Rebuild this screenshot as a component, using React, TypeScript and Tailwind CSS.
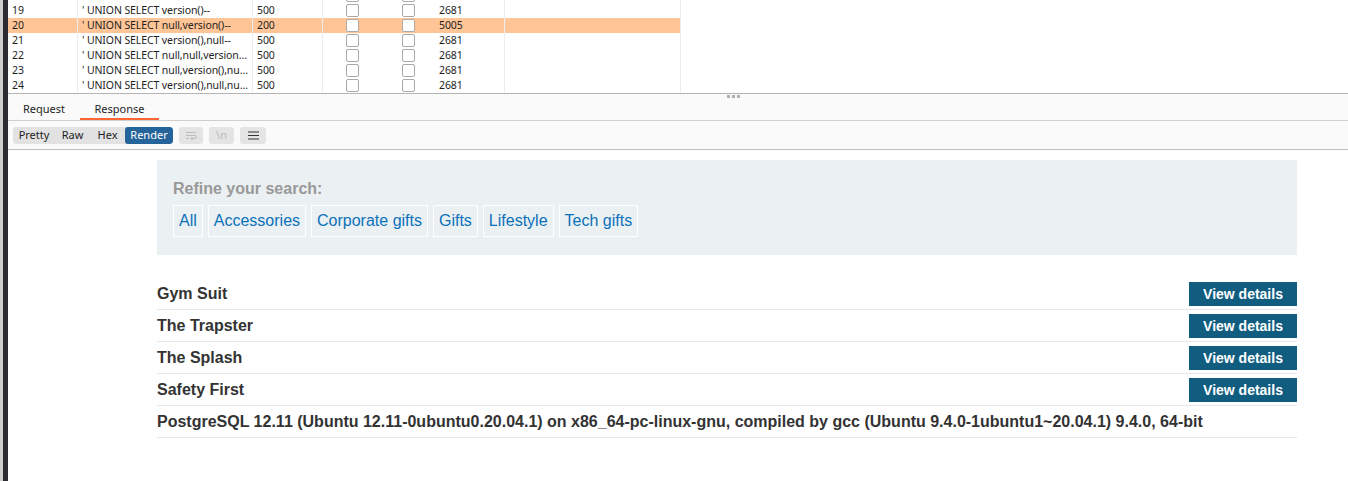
import React from "react";

type Row = { n: number; payload: string; status: number; len: number; hit?: boolean };

const ROWS: Row[] = [
  { n: 18, payload: "' UNION SELECT null,null--", status: 500, len: 2681 },
  { n: 19, payload: "' UNION SELECT version()--", status: 500, len: 2681 },
  { n: 20, payload: "' UNION SELECT null,version()--", status: 200, len: 5005, hit: true },
  { n: 21, payload: "' UNION SELECT version(),null--", status: 500, len: 2681 },
  { n: 22, payload: "' UNION SELECT null,null,version()--", status: 500, len: 2681 },
  { n: 23, payload: "' UNION SELECT null,version(),null--", status: 500, len: 2681 },
  { n: 24, payload: "' UNION SELECT version(),null,null--", status: 500, len: 2681 },
];

const FILTERS = ["All", "Accessories", "Corporate gifts", "Gifts", "Lifestyle", "Tech gifts"];
const PRODUCTS = ["Gym Suit", "The Trapster", "The Splash", "Safety First"];
const VERSION =
  "PostgreSQL 12.11 (Ubuntu 12.11-0ubuntu0.20.04.1) on x86_64-pc-linux-gnu, compiled by gcc (Ubuntu 9.4.0-1ubuntu1~20.04.1) 9.4.0, 64-bit";

function Box() {
  return <span className="block h-[13px] w-[13px] rounded-[2px] border border-[#a9a9a9] bg-white" />;
}

function ResultRow({ r }: { r: Row }) {
  return (
    <div className={`flex h-[15px] w-[673px] items-center ${r.hit ? "bg-[#ffc597]" : ""}`}>
      <div className="h-full w-[70px] truncate border-r border-[#ececec] pl-[4px] leading-[15px]">{r.n}</div>
      <div className="h-full w-[175px] truncate border-r border-[#ececec] pl-[4px] pr-[2px] leading-[15px]">{r.payload}</div>
      <div className="h-full w-[70px] border-r border-[#ececec] pl-[4px] leading-[15px]">{r.status}</div>
      <div className="flex h-full w-[182px] items-center border-r border-[#ececec]">
        <span className="ml-[23px]"><Box /></span>
        <span className="ml-[43px]"><Box /></span>
        <span className="ml-[24px] leading-[15px]">{r.len}</span>
      </div>
      <div className="h-full w-[176px] border-r border-[#ececec]" />
    </div>
  );
}

export default function App() {
  return (
    <div className="flex h-[481px] w-[1348px] overflow-hidden bg-white font-['Liberation_Sans',Arial,sans-serif]">
      <div className="w-[3px] bg-[#cfcfcf]" />
      <div className="w-[5px] bg-[#2a2c32]" />
      <div className="flex min-w-0 flex-1 flex-col">
        {/* results table */}
        <div className="h-[94px] overflow-hidden border-b border-[#b4b4b4] font-['Noto_Sans',sans-serif] text-[10.5px] tracking-[-0.1px] text-[#1e1e1e]">
          <div className="-mt-[12px]">
            {ROWS.map((r) => (
              <ResultRow key={r.n} r={r} />
            ))}
          </div>
        </div>

        {/* tabs */}
        <div className="relative flex h-[27px] border-b border-[#cfcfcf] bg-[#fafafa] font-['Noto_Sans',sans-serif] text-[11px] text-[#1e1e1e]">
          <div className="absolute left-[719px] top-[1px] flex gap-[2px]">
            <span className="h-[3px] w-[3px] bg-[#b0b0b0]" />
            <span className="h-[3px] w-[3px] bg-[#b0b0b0]" />
            <span className="h-[3px] w-[3px] bg-[#b0b0b0]" />
          </div>
          <div className="flex w-[72px] items-center justify-center pt-[4px]">Request</div>
          <div className="flex w-[79px] items-center justify-center border-b-2 border-[#ff6633] pt-[6px]">Response</div>
        </div>

        {/* toolbar */}
        <div className="flex h-[29px] items-center gap-[6px] border-b border-[#bdbdbd] bg-[#fafafa] pl-[5px] pt-[1px] font-['Noto_Sans',sans-serif] text-[11px] text-[#1e1e1e]">
          <div className="flex h-[17px] overflow-hidden rounded-[3px] bg-[#e2e2e2]">
            <span className="flex w-[42px] items-center justify-center">Pretty</span>
            <span className="flex w-[35px] items-center justify-center">Raw</span>
            <span className="flex w-[35px] items-center justify-center">Hex</span>
            <span className="flex w-[48px] items-center justify-center rounded-[3px] bg-[#25639b] text-white">Render</span>
          </div>
          <span className="flex h-[17px] w-[24px] items-center justify-center rounded-[3px] bg-[#e4e4e4]">
            <svg width="12" height="9" viewBox="0 0 12 9" fill="none" stroke="#bcbcbc" strokeWidth="1">
              <path d="M1 1.5h10M1 4.5h9a1.5 1.5 0 010 3H6M7.5 6l-1.5 1.5L7.5 9M1 7.5h3" />
            </svg>
          </span>
          <span className="flex h-[17px] w-[25px] items-center justify-center rounded-[3px] bg-[#e4e4e4] text-[#bcbcbc]">\n</span>
          <span className="flex h-[17px] w-[26px] items-center justify-center rounded-[3px] bg-[#e4e4e4]">
            <svg width="11" height="9" viewBox="0 0 11 9" fill="none" stroke="#333" strokeWidth="1.2">
              <path d="M0 1h11M0 4.5h11M0 8h11" />
            </svg>
          </span>
        </div>

        {/* rendered response */}
        <div className="flex-1 pl-[149px] pt-[10px]">
          <div className="w-[1140px]">
            <div className="h-[95px] bg-[#ebf0f2] px-[16px] pt-[19px]">
              <div className="text-[16px] font-bold leading-[20px] text-[#999999]">Refine your search:</div>
              <div className="mt-[6px] flex gap-[5px]">
                {FILTERS.map((f) => (
                  <span
                    key={f}
                    className="flex h-[32px] items-center border border-white px-[5px] text-[16px] text-[#0a71bb]"
                  >
                    {f}
                  </span>
                ))}
              </div>
            </div>

            <div className="mt-[23px] text-[16px] font-bold text-[#333333]">
              {PRODUCTS.map((p) => (
                <div key={p} className="flex h-[32px] items-center justify-between border-b border-[#e6e6e6] pt-[1px]">
                  <span>{p}</span>
                  <span className="flex h-[24px] w-[108px] items-center justify-center bg-[#115d7f] text-[14px] text-white">
                    View details
                  </span>
                </div>
              ))}
              <div className="flex h-[32px] items-center border-b border-[#e6e6e6] pt-[1px]">{VERSION}</div>
            </div>
          </div>
        </div>
      </div>
    </div>
  );
}
